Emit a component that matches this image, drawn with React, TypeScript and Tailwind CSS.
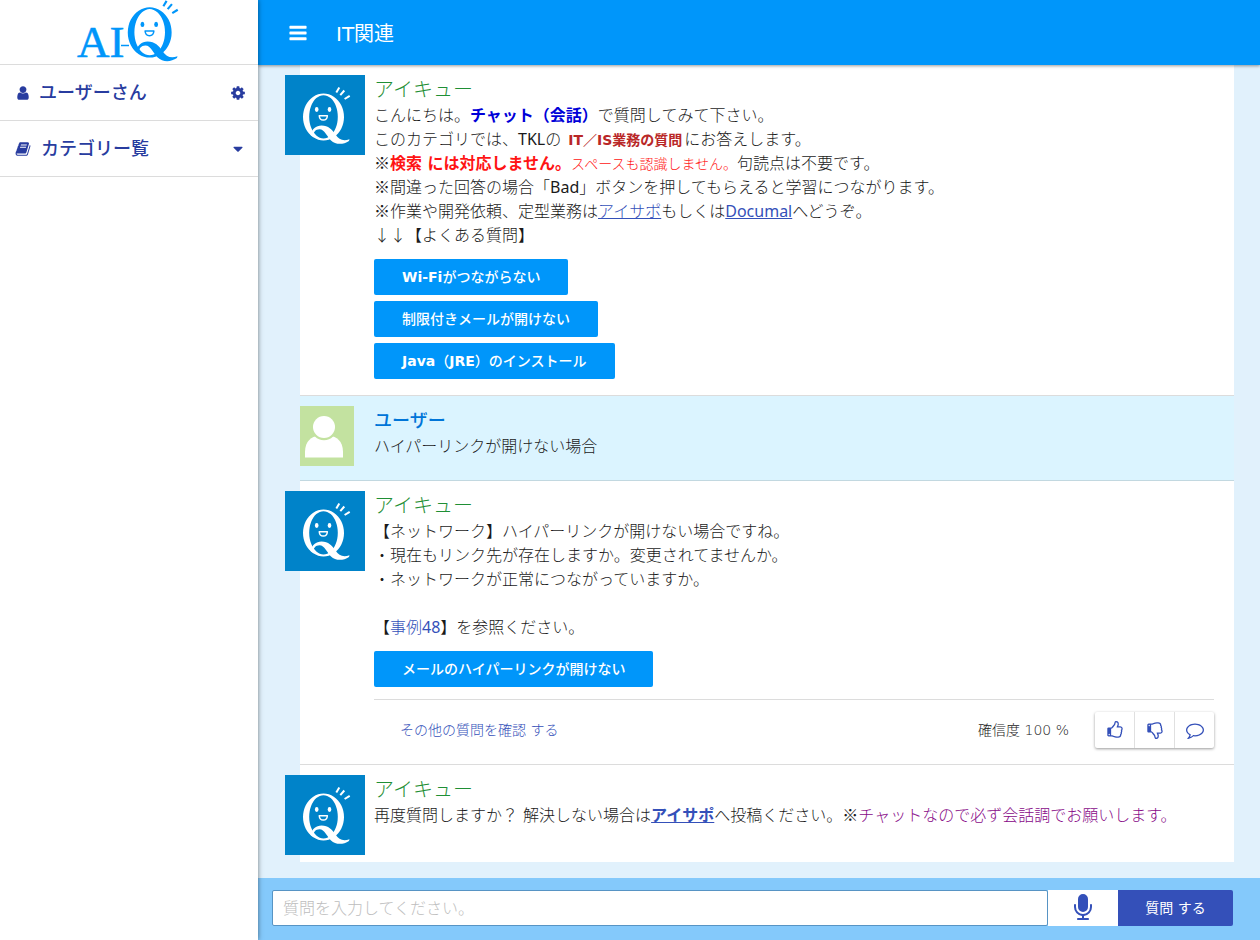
import { useState } from 'react';
import type { ReactNode } from 'react';

const ICONS = {
  bars: 'M1664 1344v128q0 26-19 45t-45 19h-1408q-26 0-45-19t-19-45v-128q0-26 19-45t45-19h1408q26 0 45 19t19 45zm0-512v128q0 26-19 45t-45 19h-1408q-26 0-45-19t-19-45v-128q0-26 19-45t45-19h1408q26 0 45 19t19 45zm0-512v128q0 26-19 45t-45 19h-1408q-26 0-45-19t-19-45v-128q0-26 19-45t45-19h1408q26 0 45 19t19 45z',
  user: 'M1536 1399q0 109-62.5 187t-150.5 78h-854q-88 0-150.5-78t-62.5-187q0-85 8.5-160.5t31.5-152 58.5-131 94-89 134.5-34.5q131 128 313 128t313-128q76 0 134.5 34.5t94 89 58.5 131 31.5 152 8.5 160.5zm-256-887q0 159-112.5 271.5t-271.5 112.5-271.5-112.5-112.5-271.5 112.5-271.5 271.5-112.5 271.5 112.5 112.5 271.5z',
  cog: 'M1152 896q0-106-75-181t-181-75-181 75-75 181 75 181 181 75 181-75 75-181zm512-109v222q0 12-8 23t-20 13l-185 28q-19 54-39 91 35 50 107 138 10 12 10 25t-9 23q-27 37-99 108t-94 71q-12 0-26-9l-138-108q-44 23-91 38-16 136-29 186-7 28-36 28h-222q-14 0-24.5-8.5t-11.5-21.5l-28-184q-49-16-90-37l-141 107q-10 9-25 9-14 0-25-11-126-114-165-168-7-10-7-23 0-12 8-23 15-21 51-66.5t54-70.5q-27-50-41-99l-183-27q-13-2-21-12.5t-8-23.5v-222q0-12 8-23t19-13l186-28q14-46 39-92-40-57-107-138-10-12-10-24 0-10 9-23 26-36 98.5-107.5t94.5-71.5q13 0 26 10l138 107q44-23 91-38 16-136 29-186 7-28 36-28h222q14 0 24.5 8.5t11.5 21.5l28 184q49 16 90 37l142-107q9-9 24-9 13 0 25 10 129 119 165 170 7 8 7 22 0 12-8 23-15 21-51 66.5t-54 70.5q26 50 41 98l183 28q13 2 21 12.5t8 23.5z',
  book: 'M1703 478q40 57 18 129l-275 906q-19 64-76.5 107.5t-122.5 43.5h-923q-77 0-148.5-53.5t-99.5-131.5q-24-67-2-127 0-4 3-27t4-37q1-8-3-21.5t-3-19.5q2-11 8-21t16.5-23.5 16.5-23.5q23-38 45-91.5t30-91.5q3-10 .5-30t-.5-28q3-11 17-28t17-23q21-36 42-92t25-90q1-9-2.5-32t.5-28q4-13 22-30.5t22-22.5q19-26 42.5-84.5t27.5-96.5q1-8-3-25.5t-2-26.5q2-8 9-18t18-23 17-21q8-12 16.5-30.5t15-35 16-36 19.5-32 26.5-23.5 36-11.5 47.5 5.5l-1 3q38-9 51-9h761q74 0 114 56t18 130l-274 906q-36 119-71.5 153.5t-128.5 34.5h-869q-27 0-38 15-11 16-1 43 24 70 144 70h923q29 0 56-15.5t35-41.5l300-987q7-22 5-57 38 15 59 43zm-1064 2q-4 13 2 22.5t20 9.5h608q13 0 25.5-9.5t16.5-22.5l21-64q4-13-2-22.5t-20-9.5h-608q-13 0-25.5 9.5t-16.5 22.5zm-83 256q-4 13 2 22.5t20 9.5h608q13 0 25.5-9.5t16.5-22.5l21-64q4-13-2-22.5t-20-9.5h-608q-13 0-25.5 9.5t-16.5 22.5z',
  caret: 'M1408 704q0 26-19 45l-448 448q-19 19-45 19t-45-19l-448-448q-19-19-19-45t19-45 45-19h896q26 0 45 19t19 45z',
  thumb: 'M384 1344q0-26-19-45t-45-19-45 19-19 45 19 45 45 19 45-19 19-45zm1152-576q0-51-39-89.5t-89-38.5h-352q0-58 48-159.5t48-160.5q0-98-32-145t-128-47q-26 26-38 85t-30.5 125.5-59.5 109.5q-22 23-77 91-4 5-23 30t-31.5 41-34.5 42.5-40 44-38.5 35.5-40 27-35.5 9h-32v640h32q13 0 31.5 3t33 6.5 38 11 35 11.5 35.5 12.5 29 10.5q211 73 342 73h121q192 0 192-167 0-26-5-56 30-16 47.5-52.5t17.5-73.5-18-69q53-50 53-119 0-25-10-55.5t-25-47.5q32-1 53.5-47t21.5-81zm128-1q0 89-49 163 9 33 9 69 0 77-38 144 3 21 3 43 0 101-60 178 1 139-85 219.5t-227 80.5h-129q-96 0-189.5-22.5t-216.5-65.5q-116-40-138-40h-288q-53 0-90.5-37.5t-37.5-90.5v-640q0-53 37.5-90.5t90.5-37.5h274q36-24 137-155 58-75 107-128 24-25 35.5-85.5t30.5-126.5 62-108q39-37 90-37 84 0 151 32.5t102 101.5 35 186q0 93-48 192h176q104 0 180 76t76 179z',
  comment: 'M896 384q-204 0-381.5 69.5t-282 187.5-104.5 255q0 112 71.5 213.5t201.5 175.5l87 50-27 96q-24 91-70 172 152-63 275-171l43-38 57 6q69 8 130 8 204 0 381.5-69.5t282-187.5 104.5-255-104.5-255-282-187.5-381.5-69.5zm896 512q0 174-120 321.5t-326 233-450 85.5q-70 0-145-8-198 175-460 242-49 14-114 22h-5q-15 0-27-10.5t-16-27.5v-1q-3-4-.5-12t2-10 4.5-9.5l6-9 7-8.5 8-9q7-8 31-34.5t34.5-38 31-39.5 32.5-51 27-59 26-76q-157-89-247.5-220t-90.5-281q0-130 71-248.5t191-204.5 286-136.5 348-50.5 348 50.5 286 136.5 191 204.5 71 248.5z',
  mic: 'M1472 704v128q0 221-147.5 384.5t-364.5 187.5v132h256q26 0 45 19t19 45-19 45-45 19h-640q-26 0-45-19t-19-45 19-45 45-19h256v-132q-217-24-364.5-187.5t-147.5-384.5v-128q0-26 19-45t45-19 45 19 19 45v128q0 185 131.5 316.5t316.5 131.5 316.5-131.5 131.5-316.5v-128q0-26 19-45t45-19 45 19 19 45zm-256-384v512q0 132-94 226t-226 94-226-94-94-226v-512q0-132 94-226t226-94 226 94 94 226z',
};

function Icon({ name, className }: { name: keyof typeof ICONS; className?: string }) {
  return (
    <svg viewBox="0 0 1792 1792" fill="currentColor" aria-hidden="true" className={className}>
      <path d={ICONS[name]} />
    </svg>
  );
}

// Smiling mascot, shared by the logo and the bot avatar
function Mascot() {
  return (
    <g fill="none" stroke="currentColor">
      <path
        fill="currentColor" stroke="none" fillRule="evenodd"
        d="M38.5 18.5a20.5 23.5 0 1 0 .01 0zM38.5 20.2a14.3 21.6 0 1 1-.01 0z"
      />
      <path
        fill="currentColor" stroke="none"
        d="M25.500 60C27 54 31 50.500 36.500 50.500C43.500 50.500 47 54.500 50.500 59.500C54 64.500 58 66.500 64.500 64.200L64 66C58 70 50.500 69.800 46 65.500C42 61.500 39.500 54.200 34.500 54.200C30.500 54.200 28.500 57 28 61.500z"
      />
      <ellipse cx="31.700" cy="34.500" rx="1.800" ry="2.400" fill="currentColor" stroke="none" />
      <ellipse cx="44.500" cy="34.500" rx="1.800" ry="2.400" fill="currentColor" stroke="none" />
      <path strokeWidth="1.400" strokeLinejoin="round" d="M34.200 40.700H42.400C42.200 43.700 40.800 45 38.300 45S34.400 43.700 34.200 40.700z" />
      <path strokeWidth="2" d="M54.300 12.500L51.300 17.500M59.300 15.500L55.300 20.200M64.700 20.800L59.600 24" />
    </g>
  );
}

function Logo() {
  return (
    <svg viewBox="0 0 258 64" width="258" height="64" role="img" aria-label="AI-Q" className="overflow-visible text-[#0096fa]">
      <text x="77" y="57" fontSize="45" fill="currentColor" stroke="currentColor" strokeWidth="0.500" className="font-['Liberation_Serif',serif]">AI</text>
      <path d="M121 45.500h8" stroke="currentColor" strokeWidth="1.500" />
      <g transform="translate(108.500 -12.500) scale(1.070)">
        <Mascot />
      </g>
    </svg>
  );
}

function BotAvatar() {
  return (
    <svg viewBox="0 0 80 80" className="-ml-[15px] mr-[9px] size-20 shrink-0 bg-[#0083c9] text-white" aria-hidden="true">
      <Mascot />
    </svg>
  );
}

function UserAvatar() {
  return (
    <svg viewBox="0 0 54 60" className="mr-5 h-[60px] w-[54px] shrink-0 bg-[#c3e2a0]" aria-hidden="true">
      <path fill="#fff" d="M5 51.500V46C5 35 12 30 18 30H30C36 30 43 35 43 46V51.500z" />
      <circle cx="24" cy="21.500" r="12.800" fill="#c3e2a0" />
      <circle cx="24" cy="21" r="11" fill="#fff" />
    </svg>
  );
}

function BotMessage({ last, children }: { last?: boolean; children: ReactNode }) {
  return (
    <article className={last ? 'flex items-start bg-white pt-2.5 pb-[7px]' : 'flex items-start border-b border-[#dcdcdc] bg-white pt-2.5 pb-4'}>
      <BotAvatar />
      <div className="min-w-0 flex-1 pt-px pr-5">
        <h2 className="text-xl leading-7 font-light text-[#1f8f35]">アイキュー</h2>
        {children}
      </div>
    </article>
  );
}

function AnswerButton({ children }: { children: ReactNode }) {
  return (
    <button type="button" className="h-9 cursor-pointer rounded-xs bg-[#0096fa] px-7 text-sm font-medium text-white hover:bg-[#0088e6]">
      {children}
    </button>
  );
}

// Latin words are a step heavier than the light Japanese text
function En({ children }: { children: ReactNode }) {
  return <span className="font-['Noto_Sans',sans-serif] leading-none font-normal">{children}</span>;
}

// Full-width marks, taken from the Japanese font
function Mark({ children }: { children: ReactNode }) {
  return <span className="font-['Noto_Sans_CJK_JP',sans-serif] leading-none">{children}</span>;
}

const linkClass = 'text-[#3450b9] underline';
const voteClass = 'flex h-9 flex-1 cursor-pointer items-center justify-center text-[#3450b9]';

export default function App() {
  const [question, setQuestion] = useState('');

  return (
    <div className="flex min-h-screen bg-[#e1f1fc] font-['DejaVu_Sans','Noto_Sans_CJK_JP',sans-serif] text-base leading-6 font-light text-[#1a1a1a]">
      <aside className="z-10 w-[258px] shrink-0 bg-white text-lg font-medium text-[#283c9f] shadow-[0_0_5px_rgba(0,0,0,0.5)]">
        <div className="h-[65px] border-b border-[#dcdcdc]">
          <Logo />
        </div>
        <div className="flex h-14 items-center border-b border-[#dcdcdc] pr-3 pl-[15px]">
          <Icon name="user" className="mr-2 size-4" />
          <span className="flex-1">ユーザーさん</span>
          <button type="button" aria-label="設定" className="cursor-pointer">
            <Icon name="cog" className="size-4" />
          </button>
        </div>
        <button type="button" className="flex h-14 w-full cursor-pointer items-center border-b border-[#dcdcdc] pr-3 pl-[15px] text-left">
          <Icon name="book" className="mr-2.5 size-4" />
          <span className="flex-1">カテゴリー覧</span>
          <Icon name="caret" className="size-4" />
        </button>
      </aside>

      <div className="flex min-w-0 flex-1 flex-col">
        <header className="z-[5] flex h-[65px] shrink-0 items-center bg-[#0096fa] pl-[30px] text-white shadow-[0_1px_3px_rgba(0,0,0,0.4)]">
          <button type="button" aria-label="メニュー" className="mr-7 cursor-pointer">
            <Icon name="bars" className="size-5" />
          </button>
          <h1 className="pt-0.5 text-xl font-normal">IT関連</h1>
        </header>

        <main className="flex-1 pr-[26px] pb-4 pl-[42px]">
          <BotMessage>
            <p>
              こんにちは。<b className="font-bold text-[#0000d8]">チャット（会話）</b>で質問してみて下さい。
            </p>
            <p>
              このカテゴリでは、<En>TKL</En>の <b className="px-0.5 text-sm leading-none font-bold text-[#b92727]">IT／IS業務の質問</b>にお答えします。
            </p>
            <p>
              <Mark>※</Mark><b className="font-bold text-[#ff1414]">検索 には対応しません。</b>
              <span className="text-sm leading-none text-[#ff1414]">スペースも認識しません。</span>句読点は不要です。
            </p>
            <p><Mark>※</Mark>間違った回答の場合「<En>Bad</En>」ボタンを押してもらえると学習につながります。</p>
            <p>
              <Mark>※</Mark>作業や開発依頼、定型業務は<a href="#" className={linkClass}>アイサポ</a>もしくは<a href="#" className={linkClass}><En>Documal</En></a>へどうぞ。
            </p>
            <p><Mark>↓↓</Mark>【よくある質問】</p>
            <div className="mt-[11px] flex flex-col items-start gap-1.5">
              <AnswerButton><b>Wi-Fi</b>がつながらない</AnswerButton>
              <AnswerButton>制限付きメールが開けない</AnswerButton>
              <AnswerButton><b>Java</b>（<b>JRE</b>）のインストール</AnswerButton>
            </div>
          </BotMessage>

          <article className="flex items-start border-b border-[#c2d8e0] bg-[#dbf4ff] pt-2.5 pb-[14px]">
            <UserAvatar />
            <div className="pt-px">
              <h2 className="text-lg leading-7 font-medium text-[#0075d8]">ユーザー</h2>
              <p>ハイパーリンクが開けない場合</p>
            </div>
          </article>

          <BotMessage>
            <p>【ネットワーク】ハイパーリンクが開けない場合ですね。</p>
            <p>・現在もリンク先が存在しますか。変更されてませんか。</p>
            <p>・ネットワークが正常につながっていますか。</p>
            <p className="mt-6">
              【<a href="#" className="text-[#3450b9]">事例<En>48</En></a>】を参照ください。
            </p>
            <div className="mt-[11px]">
              <AnswerButton>メールのハイパーリンクが開けない</AnswerButton>
            </div>
            <div className="mt-3 flex items-center border-t border-[#dcdcdc] pt-3 text-sm">
              <a href="#" className="ml-[26px] flex-1 text-[#3450b9]">その他の質問を確認 する</a>
              <span className="mr-[26px]">確信度 100 %</span>
              <div className="flex w-[119px] divide-x divide-[#e0e0e0] rounded-xs bg-white shadow-[0_1px_3px_rgba(0,0,0,0.4)]">
                <button type="button" aria-label="Good" className={voteClass}>
                  <Icon name="thumb" className="size-[18px]" />
                </button>
                <button type="button" aria-label="Bad" className={voteClass}>
                  <Icon name="thumb" className="size-[18px] -scale-y-100" />
                </button>
                <button type="button" aria-label="コメント" className={voteClass}>
                  <Icon name="comment" className="size-[18px]" />
                </button>
              </div>
            </div>
          </BotMessage>

          <BotMessage last>
            <p>
              再度質問しますか？ 解決しない場合は<a href="#" className="font-bold text-[#3450b9] underline">アイサポ</a>へ投稿ください。<Mark>※</Mark><span className="text-[#880a88]">チャットなので必ず会話調でお願いします。</span>
            </p>
          </BotMessage>
        </main>

        <form className="flex shrink-0 bg-[#84c9fb] pt-3 pr-[27px] pb-[14px] pl-[14px]" onSubmit={(e) => e.preventDefault()}>
          <input
            type="text" aria-label="質問" placeholder="質問を入力してください。"
            value={question} onChange={(e) => setQuestion(e.target.value)}
            className="h-9 min-w-0 flex-1 rounded-xs border border-[#5794c4] bg-white px-2.5 placeholder:text-[#bdbdbd] focus:outline-none"
          />
          <button type="button" aria-label="音声入力" className="flex h-9 w-[70px] cursor-pointer items-center justify-center bg-white text-[#3450b9]">
            <Icon name="mic" className="size-7" />
          </button>
          <button type="submit" className="h-9 w-[115px] cursor-pointer rounded-r-xs bg-[#3450b9] text-sm font-normal text-white">
            質問 する
          </button>
        </form>
      </div>
    </div>
  );
}
